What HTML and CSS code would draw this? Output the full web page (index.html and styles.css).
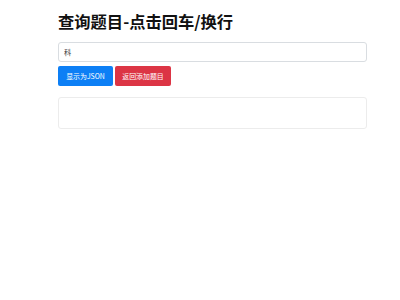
FILE: index.html
```html
<!DOCTYPE html>
<html lang="zh-CN">
<head>
<meta charset="utf-8">
<link rel="stylesheet" href="styles.css">
</head>
<body>
<div class="container">
  <h1 class="title">查询题目-点击回车/换行</h1>
  <input class="search" type="text" value="科">
  <div class="actions">
    <button class="btn btn-primary">显示为JSON</button>
    <button class="btn btn-danger">返回添加题目</button>
  </div>
  <div class="result"></div>
</div>
</body>
</html>
```

FILE: styles.css
```css
html, body {
  margin: 0;
  padding: 0;
  background: #ffffff;
}
body {
  font-family: "Noto Sans CJK SC", "Noto Sans", sans-serif;
  color: #212529;
}
.container {
  width: 309px;
  margin-left: 58px;
  padding-top: 11px;
  display: flex;
  flex-direction: column;
}
.title {
  margin: 0;
  font-size: 16.3px;
  line-height: 20px;
  font-weight: 700;
  color: #111;
}
.search {
  margin-top: 11px;
  box-sizing: border-box;
  width: 309px;
  height: 20px;
  border: 1px solid #d9dde1;
  border-radius: 3px;
  padding: 0 5px;
  font-family: "Noto Sans CJK SC", sans-serif;
  font-size: 7.2px;
  color: #333;
  outline: none;
}
.actions {
  margin-top: 4px;
  display: flex;
  gap: 2px;
}
.btn {
  box-sizing: border-box;
  height: 20px;
  border: none;
  border-radius: 2px;
  padding: 0;
  white-space: nowrap;
  text-align: center;
  font-family: "Noto Sans CJK SC", sans-serif;
  font-size: 6.9px;
  color: #fff;
  cursor: pointer;
}
.btn-primary {
  background: #0d7ff5;
  width: 55px;
}
.btn-danger {
  background: #dc3545;
  width: 56px;
}
.result {
  margin-top: 11px;
  box-sizing: border-box;
  height: 32px;
  border: 1px solid #ececec;
  border-radius: 3px;
}
```
